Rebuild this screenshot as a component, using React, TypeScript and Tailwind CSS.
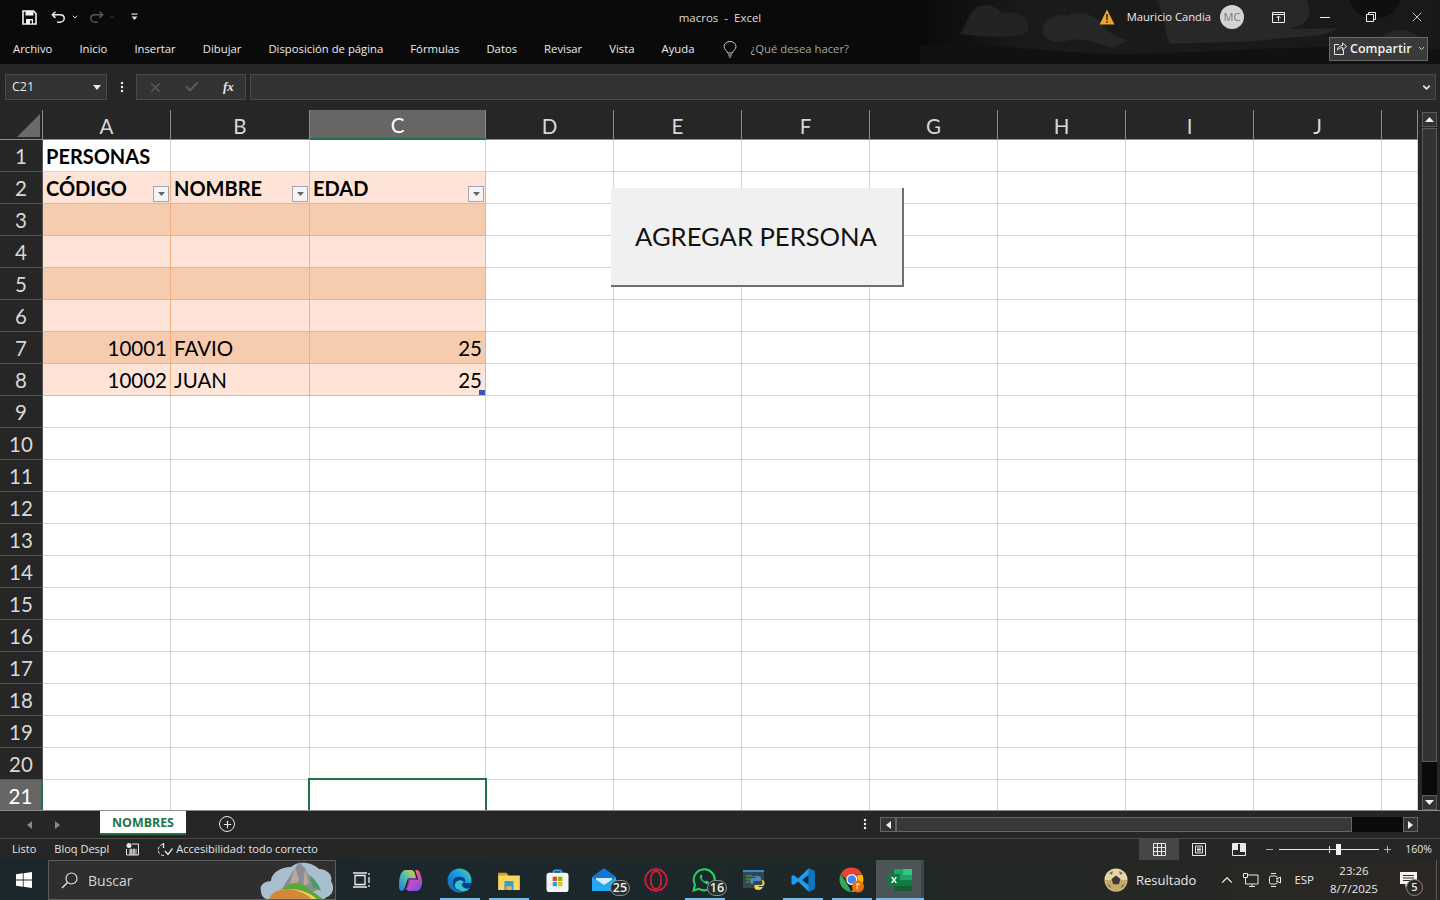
import React from "react";
import { MoreVertical, Plus, Minus, ChevronDown, ChevronUp, X, Check } from "lucide-react";

const UI = "font-['Open_Sans','Noto_Sans',sans-serif]";
const CELL = "font-['Lato','Open_Sans',sans-serif]";
const tabs = ["Archivo", "Inicio", "Insertar", "Dibujar", "Disposición de página", "Fórmulas", "Datos", "Revisar", "Vista", "Ayuda"];
const columns = ["A", "B", "C", "D", "E", "F", "G", "H", "I", "J", ""];
const rows = Array.from({ length: 21 }, (_, i) => i + 1);

const TitleBackdrop = () => (
  <svg className="absolute right-0 top-0 h-[64px] w-[520px]" viewBox="0 0 520 64" fill="none">
    <defs>
      <linearGradient id="fade" x1="0" x2="1" y1="0" y2="0">
        <stop offset="0" stopColor="#0a0a0a" />
        <stop offset="0.2" stopColor="#1a1a1a" />
        <stop offset="1" stopColor="#191919" />
      </linearGradient>
    </defs>
    <rect width="520" height="64" fill="url(#fade)" />
    <path d="M40 34c6-8 8-20 16-26 10-6 20-2 26 6 12-4 24 0 26 12 2 6-6 10-14 10-18 2-36 0-54-2z" fill="#232323" />
    <path d="M124 36c-6-14 10-24 24-20 8-6 24-2 30 4 10 12 14 16 30 20l-14 8c-14-4-30-10-44-8-10 2-20 4-26-4z" fill="#262626" />
    <path d="M236 0h150c8 14 2 26-16 28 22 2 34 0 48 0-12 10-36 8-56 10-40 6-82 4-112 6-8-18-4-30-14-44z" fill="#282828" />
    <path d="M430 0h50c-2 10-10 18-26 18-14 0-22-8-24-18z" fill="#0f0f0f" />
    <path d="M458 56c-4-12 6-26 22-26 14 0 26 10 26 24l-20 4z" fill="#262626" />
    <path d="M0 46c60-8 130 10 220 8s180-12 300-4v14H0z" fill="#111111" />
  </svg>
);

const TitleBar = () => (
  <header className={`relative h-[64px] shrink-0 overflow-hidden bg-[#0a0a0a] text-[#e8e8e8] ${UI}`}>
    <TitleBackdrop />
    <div className="relative flex h-[34px] items-center">
      <div className="flex w-[440px] items-center pl-[22px]">
        <svg width="15" height="15" viewBox="0 0 15 15" fill="none">
          <path d="M1 1h10.500L14 3.500V14H1z" stroke="#f2f2f2" strokeWidth="1.600" />
          <rect x="3.500" y="1" width="8" height="4.500" fill="#f2f2f2" />
          <rect x="4" y="9" width="7" height="5" fill="#f2f2f2" />
          <rect x="8" y="10.500" width="1.800" height="3" fill="#0a0a0a" />
        </svg>
        <svg className="ml-[14px]" width="15" height="14" viewBox="0 0 17 15" fill="none">
          <path d="M5 1.500 1.500 5 5 8.500M2 5h8c3 0 5 1.800 5 4s-2 4.500-5 4.500H7" stroke="#f0f0f0" strokeWidth="1.700" />
        </svg>
        <ChevronDown className="ml-[5px]" size={8} strokeWidth={3} color="#d8d8d8" />
        <svg className="ml-[10px]" width="15" height="14" viewBox="0 0 17 15" fill="none">
          <path d="M12 1.500 15.500 5 12 8.500M15 5H7C4 5 2 6.800 2 9s2 4.500 5 4.500h3" stroke="#585858" strokeWidth="1.700" />
        </svg>
        <ChevronDown className="ml-[4px]" size={8} strokeWidth={2} color="#585858" />
        <svg className="ml-[15px]" width="7" height="8" viewBox="0 0 7 8">
          <rect x="0.500" y="0.500" width="6" height="1.200" fill="#e0e0e0" />
          <path d="M0.500 3.500h6L3.500 7z" fill="#e0e0e0" />
        </svg>
      </div>
      <div className="absolute left-0 right-0 top-[10px] flex justify-center text-[11.5px] leading-[16px] text-[#dcdcdc]">
        <span className="whitespace-pre">macros  -  Excel</span>
      </div>
      <div className="ml-auto flex items-center">
        <svg width="16" height="16" viewBox="0 0 16 16">
          <path d="M8 0.500 15.500 15.500H0.500z" fill="#f0a531" />
          <rect x="7.200" y="5" width="1.600" height="6" fill="#3a2a0a" />
          <rect x="7.200" y="12" width="1.600" height="1.600" fill="#3a2a0a" />
        </svg>
        <span className="ml-[12px] text-[11.2px] text-[#ececec]">Mauricio Candia</span>
        <div className="ml-[9px] flex h-[24px] w-[24px] items-center justify-center rounded-full bg-[#d4d4d4] text-[11px] text-[#7a7a88]">MC</div>
        <svg className="ml-[28px]" width="13" height="11" viewBox="0 0 13 11" fill="none">
          <path d="M0.500 0.500h12v10H0.500zM0.500 2.500h12M6.500 9V4.500M4.500 6l2-2 2 2" stroke="#f0f0f0" />
        </svg>
        <div className="ml-[35px] h-px w-[10px] bg-[#f0f0f0]" />
        <svg className="ml-[36px]" width="10" height="10" viewBox="0 0 10 10" fill="none">
          <path d="M0.500 2.500h7v7h-7zM2.500 2.500v-2h7v7h-2" stroke="#f0f0f0" />
        </svg>
        <X className="ml-[33px] mr-[15px]" size={16} strokeWidth={1.200} color="#f0f0f0" />
      </div>
    </div>
    <div className="relative flex h-[30px] items-center pl-[13px] text-[11.3px] leading-[16px] text-[#ececec]">
      <nav className="flex gap-[27px]">
        {tabs.map((tab) => (
          <span key={tab}>{tab}</span>
        ))}
      </nav>
      <svg className="ml-[29px]" width="14" height="17" viewBox="0 0 14 17" fill="none">
        <path d="M4.500 12c0-2-3.500-3.500-3.500-6.500a6 5 0 0 1 12 0C13 8.500 9.500 10 9.500 12zM5 14h4M5.800 16h2.400" stroke="#c8c8c8" />
      </svg>
      <span className="ml-[13px] text-[#a6a6a6]">¿Qué desea hacer?</span>
      <div className="absolute right-[12px] top-[3px] flex h-[24px] w-[99px] items-center border border-[#6a6a6a] bg-[#3a3a3a] pb-[1px] pl-[4px] font-semibold text-[#f0f0f0]">
        <svg width="13" height="13" viewBox="0 0 13 13" fill="none">
          <path d="M5 2.500H.500v10h9V8M3.500 8c0-3 2.500-4.500 5-4.500V1l4 3.500-4 3.500V5.500C6.500 5.500 5 6.500 3.500 8z" stroke="#e8e8e8" />
        </svg>
        <span className="ml-[3px] text-[12.5px]">Compartir</span>
        <ChevronDown className="ml-[5px]" size={9} strokeWidth={2.500} color="#e0e0e0" />
      </div>
    </div>
  </header>
);

const FormulaBar = () => (
  <div className={`flex h-[46px] shrink-0 items-start bg-[#262626] pl-[5px] pt-[10px] ${UI}`}>
    <div className="flex h-[26px] w-[102px] items-center border border-[#4a4a4a] bg-[#333333] pl-[6px] pr-[4px] pt-px text-[12.5px] text-[#e8e8e8]">
      <span>C21</span>
      <svg className="ml-auto mr-[1px]" width="8" height="5" viewBox="0 0 8 5">
        <path d="M0 0h8L4 5z" fill="#e8e8e8" />
      </svg>
    </div>
    <MoreVertical className="ml-[8px] mt-[6px]" size={14} strokeWidth={2.200} color="#e8e8e8" />
    <div className="ml-[7px] flex h-[26px] w-[110px] items-center border border-[#4a4a4a] bg-[#333333] pl-[11px]">
      <X size={15} strokeWidth={2} color="#5e5e5e" />
      <Check className="ml-[21px]" size={16} strokeWidth={3} color="#5e5e5e" />
      <span className="ml-[23px] font-['Liberation_Serif',serif] text-[13px] font-bold italic text-[#e8e8e8]">fx</span>
    </div>
    <div className="ml-[4px] flex h-[26px] w-[1186px] items-center justify-end border border-[#4a4a4a] bg-[#333333] pr-[3px]">
      <ChevronDown size={11} strokeWidth={3.500} color="#e8e8e8" />
    </div>
  </div>
);

type CellValue = { text?: string; right?: boolean; bold?: boolean };

const filled: Record<number, CellValue[]> = {
  2: [{ text: "CÓDIGO", bold: true }, { text: "NOMBRE", bold: true }, { text: "EDAD", bold: true }],
  3: [{}, {}, {}],
  4: [{}, {}, {}],
  5: [{}, {}, {}],
  6: [{}, {}, {}],
  7: [{ text: "10001", right: true }, { text: "FAVIO" }, { text: "25", right: true }],
  8: [{ text: "10002", right: true }, { text: "JUAN" }, { text: "25", right: true }],
};

const FilterButton = () => (
  <div className="absolute bottom-[1px] right-[1px] flex h-[16px] w-[16px] items-center justify-center border border-[#a0a6b0] bg-[#f4f4f4]">
    <svg width="7" height="4" viewBox="0 0 7 4">
      <path d="M0 0h7L3.500 4z" fill="#666666" />
    </svg>
  </div>
);

const Sheet = () => (
  <div className="relative w-[1418px] shrink-0 overflow-hidden">
    <div className={`grid h-[700px] grid-cols-[43px_128px_139px_176px_128px_128px_128px_128px_128px_128px_128px_36px] grid-rows-[30px_repeat(21,32px)] ${CELL}`}>
      <div className="relative border-b border-r border-[#8c8c8c] bg-[#262626]">
        <svg className="absolute left-[17px] top-[4px]" width="23" height="23" viewBox="0 0 23 23">
          <path d="M23 0v23H0z" fill="#6a6a6a" />
        </svg>
      </div>
      {columns.map((col, i) => (
        <div
          key={col + i}
          className={
            col === "C"
              ? "flex items-center justify-center border-b-2 border-r border-b-[#217346] border-r-[#8c8c8c] bg-[#666666] pt-[3px] text-[20.5px] text-white"
              : "flex items-center justify-center border-b border-r border-[#8c8c8c] bg-[#262626] pt-[3px] text-[20.5px] text-[#d8d8d8]"
          }
        >
          {col}
        </div>
      ))}
      {rows.map((row) => (
        <React.Fragment key={row}>
          <div
            className={
              row === 21
                ? "flex items-center justify-center border-r-2 border-r-[#217346] bg-[#666666] pt-[1px] text-[20.5px] text-white"
                : "flex items-center justify-center border-b border-r border-[#555555] bg-[#262626] pt-[1px] text-[20.5px] text-[#d8d8d8]"
            }
          >
            {row}
          </div>
          {columns.map((col, i) => {
            const value = filled[row]?.[i];
            const tableCell = i < 3 && filled[row];
            const tone = row % 2 === 0 ? "bg-[#fde4d7] border-[#f4b084]" : "bg-[#f7cbad] border-[#f4b084]";
            return (
              <div
                key={row + col + i}
                className={`relative flex items-center overflow-visible border-b border-r pl-[3px] pr-[3px] text-black ${
                  tableCell ? tone : "border-[#d4d4d4] bg-white"
                } ${value?.right ? "justify-end" : ""} ${value?.bold ? "text-[20px] font-bold" : "pt-[2px] text-[20.5px]"}`}
              >
                {row === 1 && i === 0 && <span className="-mt-[2px] text-[20px] font-bold">PERSONAS</span>}
                {value?.text}
                {row === 2 && i < 3 && <FilterButton />}
                {row === 8 && i === 2 && <div className="absolute bottom-0 right-0 h-[5px] w-[6px] bg-[#3f51b5]" />}
                {row === 21 && i === 2 && <div className="absolute -left-[2px] -top-[2px] bottom-0 -right-[2px] z-10 border-2 border-b-0 border-[#217346]" />}
              </div>
            );
          })}
        </React.Fragment>
      ))}
    </div>
    <div className="absolute left-[611px] top-[78px] flex h-[99px] w-[293px] items-center justify-center border-b-2 border-r-2 border-[#6e6e6e] bg-[#f0f0f0] pr-[1px] font-['Lato','Open_Sans',sans-serif] text-[25.6px] text-[#111111]">
      AGREGAR PERSONA
    </div>
  </div>
);

const VerticalScroll = () => (
  <div className="flex w-[22px] flex-col items-center bg-[#262626] pl-[4px] pr-[3px] pt-[2px]">
    <div className="flex h-[15px] w-[15px] shrink-0 items-center justify-center border border-[#5c5c5c] bg-[#333333]">
      <svg width="9" height="5" viewBox="0 0 9 5">
        <path d="M0 5h9L4.500 0z" fill="#f0f0f0" />
      </svg>
    </div>
    <div className="mt-px h-[634px] w-[15px] shrink-0 border border-[#5c5c5c] bg-[#333333]" />
    <div className="w-[15px] flex-1 bg-[#0a0a0a]" />
    <div className="flex h-[15px] w-[15px] shrink-0 items-center justify-center border border-[#5c5c5c] bg-[#333333]">
      <svg width="9" height="5" viewBox="0 0 9 5">
        <path d="M0 0h9L4.500 5z" fill="#f0f0f0" />
      </svg>
    </div>
  </div>
);

const SheetTabs = () => (
  <div className={`flex h-[28px] shrink-0 items-start border-t border-[#8c8c8c] bg-[#262626] ${UI}`}>
    <svg className="ml-[27px] mt-[10px]" width="6" height="8" viewBox="0 0 6 8">
      <path d="M5 0v8L0 4z" fill="#8a8a8a" />
    </svg>
    <svg className="ml-[22px] mt-[10px]" width="6" height="8" viewBox="0 0 6 8">
      <path d="M0 0v8l5-4z" fill="#8a8a8a" />
    </svg>
    <div className="ml-[39px] flex h-[24px] w-[86px] items-center justify-center border-b-2 border-[#217346] bg-white pt-[2px] text-[12.4px] font-bold text-[#217346]">NOMBRES</div>
    <div className="ml-[33px] mt-[5px] flex h-[16px] w-[16px] items-center justify-center rounded-full border-[1.500px] border-[#e8e8e8]">
      <Plus size={11} strokeWidth={2.500} color="#e8e8e8" />
    </div>
    <MoreVertical className="ml-[623px] mt-[6px]" size={14} strokeWidth={2.200} color="#f0f0f0" />
    <div className="ml-[8px] mt-[6px] flex h-[15px] w-[538px]">
      <div className="flex w-[16px] items-center justify-center border border-[#666666] bg-[#333333]">
        <svg width="5" height="8" viewBox="0 0 5 8">
          <path d="M5 0v8L0 4z" fill="#f0f0f0" />
        </svg>
      </div>
      <div className="w-[456px] border border-[#666666] bg-[#383838]" />
      <div className="flex-1 bg-[#0a0a0a]" />
      <div className="flex w-[15px] items-center justify-center border border-[#666666] bg-[#333333]">
        <svg width="5" height="8" viewBox="0 0 5 8">
          <path d="M0 0v8l5-4z" fill="#f0f0f0" />
        </svg>
      </div>
    </div>
  </div>
);

const StatusBar = () => (
  <div className={`flex h-[22px] shrink-0 items-center border-t border-[#4a4a4a] bg-[#262626] pl-[12px] text-[11px] text-[#e4e4e4] ${UI}`}>
    <span>Listo</span>
    <span className="ml-[18px]">Bloq Despl</span>
    <svg className="ml-[17px]" width="13" height="13" viewBox="0 0 13 13" fill="none">
      <circle cx="3" cy="2.500" r="2.500" fill="#e8e8e8" />
      <path d="M6 1h6.500v11H.500V6" stroke="#e8e8e8" />
      <path d="M3 7h8M3 9h8M3 11h8M5 5.500v6M8 5.500v6" stroke="#e8e8e8" />
    </svg>
    <svg className="ml-[18px]" width="16" height="14" viewBox="0 0 16 14" fill="none">
      <path d="M6 1.200A5.500 5.500 0 1 0 8 12.500" stroke="#e8e8e8" strokeDasharray="3 1.500" />
      <path d="M6.500 0v5M8 8l3 3.500 4.500-6" stroke="#e8e8e8" strokeWidth="1.300" />
    </svg>
    <span className="ml-[3px] whitespace-nowrap">Accesibilidad: todo correcto</span>
    <div className="ml-auto flex h-full items-center text-[10.5px]">
      <div className="flex h-full w-[40px] items-center justify-center bg-[#474747]">
        <svg width="13" height="13" viewBox="0 0 13 13" fill="none">
          <path d="M.500.500h12v12H.500zM4.500.500v12M8.500.500v12M.500 4.500h12M.500 8.500h12" stroke="#e8e8e8" />
        </svg>
      </div>
      <div className="flex h-full w-[40px] items-center justify-center">
        <svg width="14" height="13" viewBox="0 0 14 13" fill="none">
          <path d="M.500.500h13v12H.500zM3.500 3h7v7h-7zM5 5h4M5 6.500h4M5 8h4" stroke="#e8e8e8" />
        </svg>
      </div>
      <div className="flex h-full w-[40px] items-center justify-center">
        <svg width="14" height="13" viewBox="0 0 14 13">
          <path d="M.500.500h13v12H.500z" fill="none" stroke="#e8e8e8" />
          <path d="M1 1h5v6H1zM8 1h5v8H8z" fill="#e8e8e8" />
        </svg>
      </div>
      <Minus className="ml-[5px]" size={11} strokeWidth={1.500} color="#e8e8e8" />
      <div className="relative ml-[4px] h-px w-[100px] bg-[#e8e8e8]">
        <div className="absolute left-[50px] top-[-3px] h-[7px] w-px bg-[#e8e8e8]" />
        <div className="absolute left-[57px] top-[-5px] h-[11px] w-[5px] bg-[#f0f0f0]" />
      </div>
      <Plus className="ml-[3px]" size={11} strokeWidth={1.500} color="#e8e8e8" />
      <span className="ml-[12px] mr-[8px]">160%</span>
    </div>
  </div>
);

const Badge = ({ n, className }: { n: number; className: string }) => (
  <div className={`absolute flex h-[16px] w-[20px] items-center justify-center rounded-full border border-[#8a8a8a] bg-[#26302f] text-[12.5px] font-semibold text-[#f0f0f0] ${className}`}>{n}</div>
);

const TaskIcon = ({ active, current, children }: { active?: boolean; current?: boolean; children: React.ReactNode }) => (
  <div className={current ? "relative flex h-full w-[48px] items-center justify-center bg-[#4b5558]" : "relative flex h-full w-[49px] items-center justify-center"}>
    {children}
    {active && <div className={current ? "absolute bottom-0 left-0 right-0 h-[2px] bg-[#76b9ed]" : "absolute bottom-0 left-[5px] right-[4px] h-[2px] bg-[#76b9ed]"} />}
  </div>
);

const Mountain = () => (
  <svg className="absolute right-0 top-0" width="76" height="40" viewBox="0 0 76 40">
    <path d="M2 30c-2-6 4-10 10-10 0-8 10-14 20-14 6-6 20-6 28 2 8 0 14 6 12 12 4 6 2 14-4 16l-6 4H12C6 38 2 36 2 30z" fill="#a9bfd0" />
    <path d="M24 26 34 10l6-9 6 6 6 12 8 9-12 6H30z" fill="#8d8c96" />
    <path d="M36 6l4 12-4 10-6-2zM46 8l4 14-6 4z" fill="#b9a89a" />
    <path d="M22 28c10-8 20-8 26-2s12 8 18 14H60L50 32c-8-4-18-4-28-4z" fill="#5da63a" />
    <path d="M50 14c6 4 10 10 12 16l-8-4z" fill="#4a9a6a" />
    <path d="M10 40c0-6 6-12 20-12 12 0 20 6 24 12z" fill="#d28a3a" />
    <path d="M30 28c14 0 24 6 30 12h-6c-4-6-12-10-24-12z" fill="#e7d24a" />
  </svg>
);

const Taskbar = () => (
  <div className={`relative flex h-[40px] shrink-0 items-stretch bg-gradient-to-r from-[#1b262c] via-[#1c282a] to-[#2b2722] text-[#e8e8e8] ${UI}`}>
    <div className="flex w-[48px] items-center justify-center">
      <svg width="16" height="16" viewBox="0 0 16 16" fill="#ffffff">
        <path d="M0 2.300 6.800 1.300v6.300H0zM7.600 1.200 16 0v7.600H7.600zM0 8.400h6.800v6.300L0 13.700zM7.600 8.400H16V16l-8.400-1.200z" />
      </svg>
    </div>
    <div className="relative flex w-[288px] items-center overflow-hidden border border-[#5e5e5e] bg-[#2f2f2f]">
      <svg className="ml-[12px]" width="17" height="17" viewBox="0 0 17 17" fill="none">
        <circle cx="10.500" cy="6.500" r="5.500" stroke="#e0e0e0" strokeWidth="1.200" />
        <path d="M6.500 10.500 1 16" stroke="#e0e0e0" strokeWidth="1.400" />
      </svg>
      <span className="ml-[10px] text-[14px] text-[#d4d4d4]">Buscar</span>
      <Mountain />
    </div>
    <div className="ml-px flex h-full">
      <TaskIcon>
        <svg width="18" height="16" viewBox="0 0 18 16" fill="none">
          <path d="M2 3.500h10v9H2zM0 1h14M0 15h14M16 1v2M16 5v6M16 13v2" stroke="#eeeeee" strokeWidth="1.300" />
        </svg>
      </TaskIcon>
      <TaskIcon>
        <svg width="23" height="21" viewBox="0 0 23 21">
          <defs>
            <linearGradient id="cop1" x1="0" y1="1" x2="1" y2="0">
              <stop offset="0" stopColor="#2478e8" />
              <stop offset="0.550" stopColor="#52c4a0" />
              <stop offset="1" stopColor="#e8d040" />
            </linearGradient>
            <linearGradient id="cop2" x1="0" y1="0" x2="0.600" y2="1">
              <stop offset="0" stopColor="#f0a040" />
              <stop offset="0.500" stopColor="#e8509a" />
              <stop offset="1" stopColor="#8050e8" />
            </linearGradient>
          </defs>
          <path d="M7 0h5c2 0 3 1 4 4l1 4H9L6 17c-1 3-2 4-4 4-2-1-2-3-2-6 0-8 2-15 7-15z" fill="url(#cop1)" />
          <path d="M16 0h2c2 0 3 2 4 6 1 3 1 6 1 8-1 5-3 7-6 7h-6c-3 0-3-2-5-2 2 0 3-2 4-5l1-4h8c-1-5-2-8-3-10z" fill="url(#cop2)" />
          <path d="M9 8h9l-2 8c-1 2-2 3-4 3H7l2-6z" fill="#b04ee0" opacity="0.600" />
        </svg>
      </TaskIcon>
      <TaskIcon active>
        <svg width="25" height="25" viewBox="0 0 25 25">
          <defs>
            <linearGradient id="edge" x1="0" y1="1" x2="1" y2="0">
              <stop offset="0" stopColor="#0b5fb0" />
              <stop offset="0.600" stopColor="#1b9de2" />
              <stop offset="1" stopColor="#4fd8a0" />
            </linearGradient>
          </defs>
          <circle cx="12.500" cy="12.500" r="12" fill="url(#edge)" />
          <path d="M6 14c0-5 5-6 9-5 4 1 4 5 2 6h8c0 5-7 10-12 8-5-1-8-5-7-9z" fill="#0a3f86" />
          <path d="M8 16c1-4 6-5 9-2-2 1-3 3-1 5 2 2 5 2 7 1-3 4-8 4-11 2-3-1-5-3-4-6z" fill="#37c6d0" />
        </svg>
      </TaskIcon>
      <TaskIcon active>
        <svg width="22" height="19" viewBox="0 0 24 21">
          <path d="M0 2h9l2 2h0V7H0z" fill="#d9a21b" />
          <path d="M0 5h24v16H0z" fill="#fbd75b" />
          <path d="M7 11h10v10h-3v-4h-4v4H7z" fill="#2aa0e8" />
          <path d="M9 17h6v4H9z" fill="#f3b43c" />
        </svg>
      </TaskIcon>
      <TaskIcon>
        <svg width="23" height="23" viewBox="0 0 24 24">
          <path d="M8 5V2.500C8 1 16 1 16 2.500V5" fill="none" stroke="#1fa5e8" strokeWidth="2" />
          <rect x="0.500" y="4" width="23" height="20" rx="3" fill="#f5f5f5" />
          <rect x="7" y="8" width="4.500" height="4.500" fill="#e8432a" />
          <rect x="12.500" y="8" width="4.500" height="4.500" fill="#7fba00" />
          <rect x="7" y="13.500" width="4.500" height="4.500" fill="#1fa5e8" />
          <rect x="12.500" y="13.500" width="4.500" height="4.500" fill="#f9b800" />
        </svg>
      </TaskIcon>
      <TaskIcon>
        <svg className="mr-[6px]" width="24" height="24" viewBox="0 0 24 24">
          <path d="M0 9 12 0l12 9v14H0z" fill="#1276d3" />
          <path d="M4 10h16v8H4z" fill="#d8eefb" />
          <path d="M0 9 12 17 24 9v14H0z" fill="#23a7ee" />
        </svg>
        <Badge n={25} className="bottom-[4px] right-[1px]" />
      </TaskIcon>
      <TaskIcon>
        <svg width="24" height="24" viewBox="0 0 24 24" fill="none">
          <circle cx="12" cy="12" r="10.800" stroke="#d21f3c" strokeWidth="1.800" />
          <ellipse cx="12" cy="12" rx="5.300" ry="9" stroke="#d21f3c" strokeWidth="1.800" />
        </svg>
      </TaskIcon>
      <TaskIcon active>
        <svg className="mr-[2px]" width="24" height="24" viewBox="0 0 24 24" fill="none">
          <path d="M1.500 22.500 3 16.800A10.500 10.500 0 1 1 7 20.900z" stroke="#25d366" strokeWidth="2" />
          <path d="M8.500 7c-1.500 2 0 4.500 2 6.500s5 3.500 6.500 2l-.5-2-2.500-1-1 1c-1.500-.5-3-2-3.500-3.500l1-1-1-2.500z" fill="#25d366" />
        </svg>
        <Badge n={16} className="bottom-[4px] right-[2px]" />
      </TaskIcon>
      <TaskIcon>
        <svg width="24" height="24" viewBox="0 0 24 24">
          <rect x="1" y="2" width="21" height="18" fill="#3b4449" />
          <rect x="1" y="2" width="21" height="2" fill="#2a90d8" />
          <path d="M4 8h6M4 11h5M4 14h3" stroke="#4caf50" strokeWidth="1" />
          <path d="M15 8c3 0 4 1 4 2v3h-6c-2 0-2 1-2 2v1h-1c-1 0-2-1-2-3s1-3 2-3h4v-1h-4c0-1 2-1 5-1z" fill="#4b8bbe" />
          <path d="M20 12c1.500 0 2.500 1 2.500 3s-1 3-2 3h-4v1h4c0 2-2 3-4 3s-4-1-4-2v-3h6c2 0 2-1 2-2z" fill="#ffd43b" />
        </svg>
      </TaskIcon>
      <TaskIcon active>
        <svg width="24" height="24" viewBox="0 0 24 24">
          <path d="M17.500 0.500 23.500 3v18l-6 2.500L7 13.500 2.500 17 0.500 16V8l2-1 4.500 3.500z" fill="#1f9cf0" />
          <path d="M17.500 0.500 23.500 3v18l-6 2.500z" fill="#0a76c4" />
          <path d="M17.500 7 11 12l6.500 5z" fill="#0e1c24" opacity="0.900" />
        </svg>
      </TaskIcon>
      <TaskIcon active>
        <svg width="26" height="26" viewBox="0 0 26 26">
          <path d="M1.800 7a12 12 0 0 1 21.500.5L13 8c-3 0-5 1.500-6 4z" fill="#ea4335" />
          <path d="M1.800 7 7.500 16l5 9A12.500 12.500 0 0 1 1.800 7z" fill="#34a853" />
          <path d="M23.300 7.500A12.500 12.500 0 0 1 12.500 25l5.500-9c1-2 1-5-1-7.500z" fill="#fbbc05" />
          <circle cx="12.800" cy="12.500" r="5.500" fill="#ffffff" />
          <circle cx="12.800" cy="12.500" r="4.300" fill="#4285f4" />
          <circle cx="19" cy="19.500" r="6" fill="#e8710a" />
          <rect x="17.500" y="16.500" width="3.500" height="1.200" fill="#ffe0c0" />
          <rect x="17.500" y="16.500" width="1.200" height="6" fill="#ffe0c0" />
        </svg>
      </TaskIcon>
      <TaskIcon active current>
        <svg width="24" height="22" viewBox="0 0 24 22">
          <rect x="6" y="0" width="18" height="22" rx="1" fill="#21a366" />
          <rect x="15" y="0" width="9" height="6" fill="#33c481" />
          <rect x="6" y="11" width="18" height="6" fill="#107c41" />
          <rect x="6" y="17" width="18" height="5" fill="#185c37" />
          <rect x="0" y="5" width="12" height="12" rx="1" fill="#0f7b45" />
          <path d="M3 8h1.800L6 10.200 7.200 8H9l-2 3 2 3H7.200L6 11.800 4.800 14H3l2-3z" fill="#ffffff" />
        </svg>
        <div className="absolute bottom-0 right-0 top-0 w-[3px] bg-[#3e4649]" />
      </TaskIcon>
    </div>
    <div className="ml-auto flex items-center">
      <svg width="24" height="24" viewBox="0 0 24 24">
        <circle cx="12" cy="12" r="11.500" fill="#e8d6a0" />
        <path d="M1 12a11 11 0 0 0 22 0z" fill="#b8964a" opacity="0.700" />
        <path d="M12 7.500 16.500 11l-1.700 5.200H9.200L7.500 11z" fill="#3a3a3a" />
        <path d="M5 5 9 3 8 7zM19 5l-4-2 1 4zM3 16l3 1 1 4zM21 16l-3 1-1 4z" fill="#6e6e6e" />
      </svg>
      <span className="ml-[8px] pt-px text-[13px] text-[#e8e8e8]">Resultado</span>
      <ChevronUp className="ml-[22px]" size={18} strokeWidth={1.500} color="#e8e8e8" />
      <svg className="ml-[7px]" width="16" height="14" viewBox="0 0 16 14" fill="none">
        <path d="M4 2h11v9H4M0.500.500h4v4h-4zM2.500 5v6H4M9 11v2.500M6 13.500h6" stroke="#e8e8e8" />
      </svg>
      <svg className="ml-[10px]" width="12" height="16" viewBox="0 0 12 16" fill="none">
        <rect x="0.500" y="4" width="7.500" height="8" rx="1.500" stroke="#e8e8e8" />
        <path d="M8 7l3.500-2v6L8 9M2 1.500h5M2 14.500h5" stroke="#e8e8e8" />
      </svg>
      <span className="ml-[13px] text-[11.5px]">ESP</span>
      <div className="ml-[8px] flex w-[64px] flex-col items-center text-[11.5px] leading-[18px]">
        <span>23:26</span>
        <span>8/7/2025</span>
      </div>
      <div className="relative ml-[10px] mr-[20px] flex w-[24px] justify-center">
        <svg width="17" height="16" viewBox="0 0 17 16">
          <path d="M0 0h17v12H9l-3.500 3.500V12H0z" fill="#f4f4f4" />
          <path d="M3 3.500h11M3 6h11M3 8.500h11" stroke="#26302f" />
        </svg>
        <div className="absolute left-[10px] top-[7px] flex h-[17px] w-[17px] items-center justify-center rounded-full border border-[#8a8a8a] bg-[#2b2722] text-[11px] font-semibold text-[#e8e8e8]">5</div>
      </div>
    </div>
    <div className="absolute bottom-0 right-[3px] top-0 w-px bg-[#5c5a56]" />
  </div>
);

export default function App() {
  return (
    <div className="flex h-[900px] w-[1440px] flex-col overflow-hidden bg-[#262626]">
      <TitleBar />
      <FormulaBar />
      <div className="flex h-[700px] shrink-0">
        <Sheet />
        <VerticalScroll />
      </div>
      <SheetTabs />
      <StatusBar />
      <Taskbar />
    </div>
  );
}
